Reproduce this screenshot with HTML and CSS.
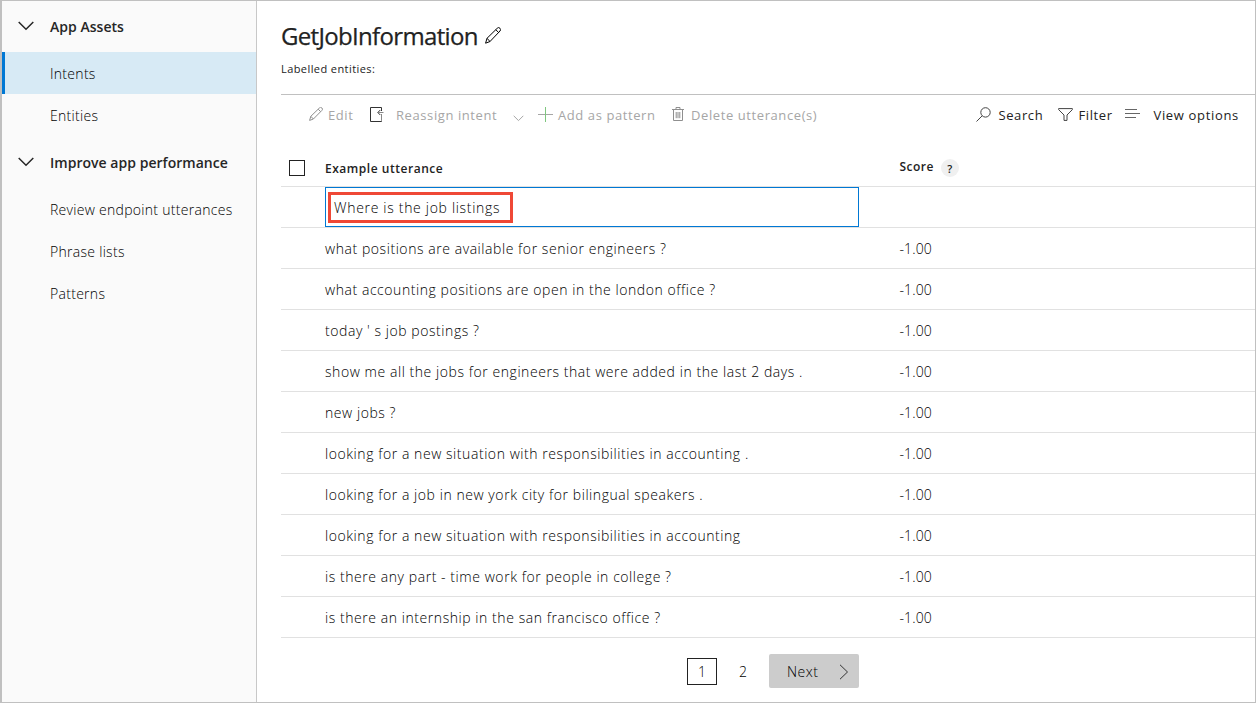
FILE: index.html
```html
<!DOCTYPE html>
<html lang="en">
<head>
<meta charset="utf-8">
<title>GetJobInformation</title>
<link rel="stylesheet" href="styles.css">
</head>
<body>
<div class="app">
  <nav class="sidebar">
    <div class="group"><svg class="chevron" width="16" height="10" viewBox="0 0 16 10"><path d="M.7 1 8 8.2 15.3 1"/></svg><span>App Assets</span></div>
    <a class="item active"><span>Intents</span></a>
    <a class="item"><span>Entities</span></a>
    <div class="group second"><svg class="chevron" width="16" height="10" viewBox="0 0 16 10"><path d="M.7 1 8 8.2 15.3 1"/></svg><span>Improve app performance</span></div>
    <a class="item"><span>Review endpoint utterances</span></a>
    <a class="item"><span>Phrase lists</span></a>
    <a class="item"><span>Patterns</span></a>
  </nav>
  <main class="main">
    <header class="heading">
      <h1>GetJobInformation</h1>
      <svg class="title-pencil" width="16" height="17" viewBox="0 0 16 17"><path d="M.6 16.2 2 11.3 12.2 1.3a1.9 1.9 0 0 1 2.8 0 1.9 1.9 0 0 1 0 2.7L5 14.5ZM2 11.3 5 14.5M10.8 2.7l2.8 2.8"/></svg>
    </header>
    <p class="labelled">Labelled entities:</p>
    <div class="toolbar">
      <span class="tool edit"><svg width="14" height="14" viewBox="0 0 14 14"><path d="M.6 13.4 1.8 9.3 10.4 1a1.6 1.6 0 0 1 2.5 0 1.6 1.6 0 0 1 0 2.4L4.4 12ZM1.8 9.3 4.4 12M9.2 2.2l2.5 2.5"/></svg><span>Edit</span></span>
      <span class="tool reassign"><svg width="14" height="16" viewBox="0 0 14 16"><path class="dark" d="M11.5 4V.5H.5v14h11V13.5M10.3 3 7.8 5.5 10.3 8"/><path class="tail" d="M13.5 5.5H8M11.5 7v6"/></svg><span>Reassign intent</span><svg class="drop" width="11" height="7" viewBox="0 0 11 7"><path d="M.7.8 5.5 5.6 10.3.8"/></svg></span>
      <span class="tool add"><svg width="15" height="15" viewBox="0 0 15 15"><path d="M0 7.5h15"/><path class="green" d="M7.5 0v15"/></svg><span>Add as pattern</span></span>
      <span class="tool delete"><svg width="12" height="14" viewBox="0 0 12 14"><path d="M0 2.5h12M4 2.5v-2h4v2M1.5 2.5v11h9v-11M4.2 5v6.2M6 5v6.2M7.8 5v6.2"/></svg><span>Delete utterance(s)</span></span>
      <span class="spacer"></span>
      <span class="tool live search"><svg width="15" height="15" viewBox="0 0 15 15"><circle cx="9.5" cy="5.4" r="4.7"/><path d="M6.2 8.8.5 14.5"/></svg><span>Search</span></span>
      <span class="tool live filter"><svg width="15" height="13" viewBox="0 0 15 13"><path d="M.6.6h13.8v1L9 7v5.4H6V7L.6 1.6Z"/></svg><span>Filter</span></span>
      <span class="tool live view"><svg width="15" height="10" viewBox="0 0 15 10"><path d="M0 .5h12M0 4.5h15M0 8.5h11"/></svg><span>View options</span></span>
    </div>
    <div class="table">
      <div class="row head"><span class="check"></span><span class="head-name">Example utterance</span><span class="head-score">Score <i class="help">?</i></span></div>
      <div class="row input-row"><span></span><div class="input"><span class="callout">Where is the job listings</span></div></div>
      <div class="row"><span></span><span>what positions are available for senior engineers ?</span><span class="score">-1.00</span></div>
      <div class="row"><span></span><span>what accounting positions are open in the london office ?</span><span class="score">-1.00</span></div>
      <div class="row"><span></span><span>today ' s job postings ?</span><span class="score">-1.00</span></div>
      <div class="row"><span></span><span>show me all the jobs for engineers that were added in the last 2 days .</span><span class="score">-1.00</span></div>
      <div class="row"><span></span><span>new jobs ?</span><span class="score">-1.00</span></div>
      <div class="row"><span></span><span>looking for a new situation with responsibilities in accounting .</span><span class="score">-1.00</span></div>
      <div class="row"><span></span><span>looking for a job in new york city for bilingual speakers .</span><span class="score">-1.00</span></div>
      <div class="row"><span></span><span>looking for a new situation with responsibilities in accounting</span><span class="score">-1.00</span></div>
      <div class="row"><span></span><span>is there any part - time work for people in college ?</span><span class="score">-1.00</span></div>
      <div class="row"><span></span><span>is there an internship in the san francisco office ?</span><span class="score">-1.00</span></div>
    </div>
    <footer class="pager">
      <span class="page current">1</span><span class="page">2</span>
      <button class="next"><span>Next</span><svg width="10" height="16" viewBox="0 0 10 16"><path d="M1 .8 8.5 8 1 15.2"/></svg></button>
    </footer>
  </main>
</div>
</body>
</html>
```
FILE: styles.css
```css
* { box-sizing: border-box; }
body { margin: 0; background: #fff; color: #000; font: 300 14px/20px "Open Sans", "Noto Sans", sans-serif; }
svg { display: block; flex: none; fill: none; stroke: currentColor; stroke-width: 1.1; }
.app { display: flex; width: 1256px; height: 703px; border: 1px solid #c0c0c0; border-left-width: 2px; overflow: hidden; white-space: nowrap; }

.sidebar { flex: none; width: 255px; background: #fafafa; border-right: 1px solid #c8c8c8; letter-spacing: .29px; }
.group { display: flex; align-items: center; gap: 16px; height: 51px; padding-left: 16px; color: #262626; font-weight: 600; letter-spacing: .03px; }
.group.second { height: 53px; }
.chevron { stroke-width: 1.5; margin-top: -1px; }
.item { display: flex; align-items: center; height: 42px; padding-left: 48px; }
.item.active { background: #d7eaf5; border-left: 3px solid #0078d4; padding-left: 45px; }
.item.active, .item.active + .item { padding-top: 2px; }

.main { flex: 1; padding-left: 24px; }
.heading { display: flex; gap: 7px; height: 57px; padding-top: 19px; }
h1 { margin: 0; color: #222; font-size: 24px; font-weight: 400; line-height: 32px; letter-spacing: -.67px; -webkit-text-stroke: .25px #222; }
.title-pencil { margin-top: 7px; stroke-width: 1; }
.labelled { margin: 0; height: 36px; color: #222; font-size: 11px; font-weight: 400; line-height: 22px; letter-spacing: .42px; }

.toolbar { display: flex; height: 56px; border-top: 1px solid #c0c0c0; padding: 0 16px 15px 28px; font-size: 13px; font-weight: 400; letter-spacing: .59px; }
.tool { display: flex; align-items: center; gap: 5px; color: #a6a6a6; }
.tool svg { stroke-width: 1; margin-top: -2px; }
.edit { width: 60px; }
.edit svg { stroke: #8f8f8f; }
.reassign { width: 169px; gap: 12px; padding-left: 1px; }
.reassign svg:first-child { margin-top: 0; }
.tool .drop { margin: 6px 0 0 4px; }
.tool .dark { stroke: #333; }
.tool .tail { stroke: #888; }
.green { stroke: #7fc77f; }
.add { width: 134px; }
.delete { gap: 7px; }
.delete svg { stroke: #8f8f8f; }
.spacer { flex: 1; }
.live { color: #222; }
.search { width: 82px; gap: 7px; }
.filter { width: 67px; }
.view { gap: 13px; letter-spacing: .67px; }
.live svg { stroke: #444; }
.view svg { stroke: #666; }

.row { display: grid; grid-template-columns: 44px 574.4px 1fr; align-items: center; height: 41px; border-bottom: 1px solid #e1e1e1; letter-spacing: .56px; padding-top: 2px; }
.head { height: 37px; color: #222; font-size: 12px; font-weight: 600; padding-top: 0; letter-spacing: .53px; }
.head-name { padding-top: 1px; }
.check { width: 16px; height: 16px; margin: -1px 0 0 8px; border: 1px solid #222; }
.head-score { display: flex; align-items: center; gap: 7px; margin-top: -3px; }
.help { width: 18px; height: 18px; border-radius: 50%; background: #f0f0f0; font-size: 11px; font-style: normal; line-height: 19px; text-align: center; margin-top: 3px; }
.input-row { padding-top: 0; }
.input { display: flex; align-items: center; width: 534px; height: 40px; border: 1px solid #0078d4; padding-left: 2px; }
.callout { width: 185px; height: 31px; border: 3px solid #ef4836; padding-left: 3px; line-height: 26px; letter-spacing: .69px; }
.score { letter-spacing: .15px; }

.pager { display: flex; align-items: center; height: 64px; padding: 2px 0 0 406px; }
.page { width: 30px; height: 27px; margin-right: 11px; line-height: 28px; text-align: center; }
.current { border: 1px solid #222; line-height: 26px; }
.next { display: flex; align-items: center; justify-content: space-between; width: 90px; height: 34px; border: 0; border-radius: 2px; background: #ccc; color: #000; padding: 1px 10px 0 18px; font: inherit; letter-spacing: .5px; }
.next svg { stroke: #333; stroke-width: 1; }
```
